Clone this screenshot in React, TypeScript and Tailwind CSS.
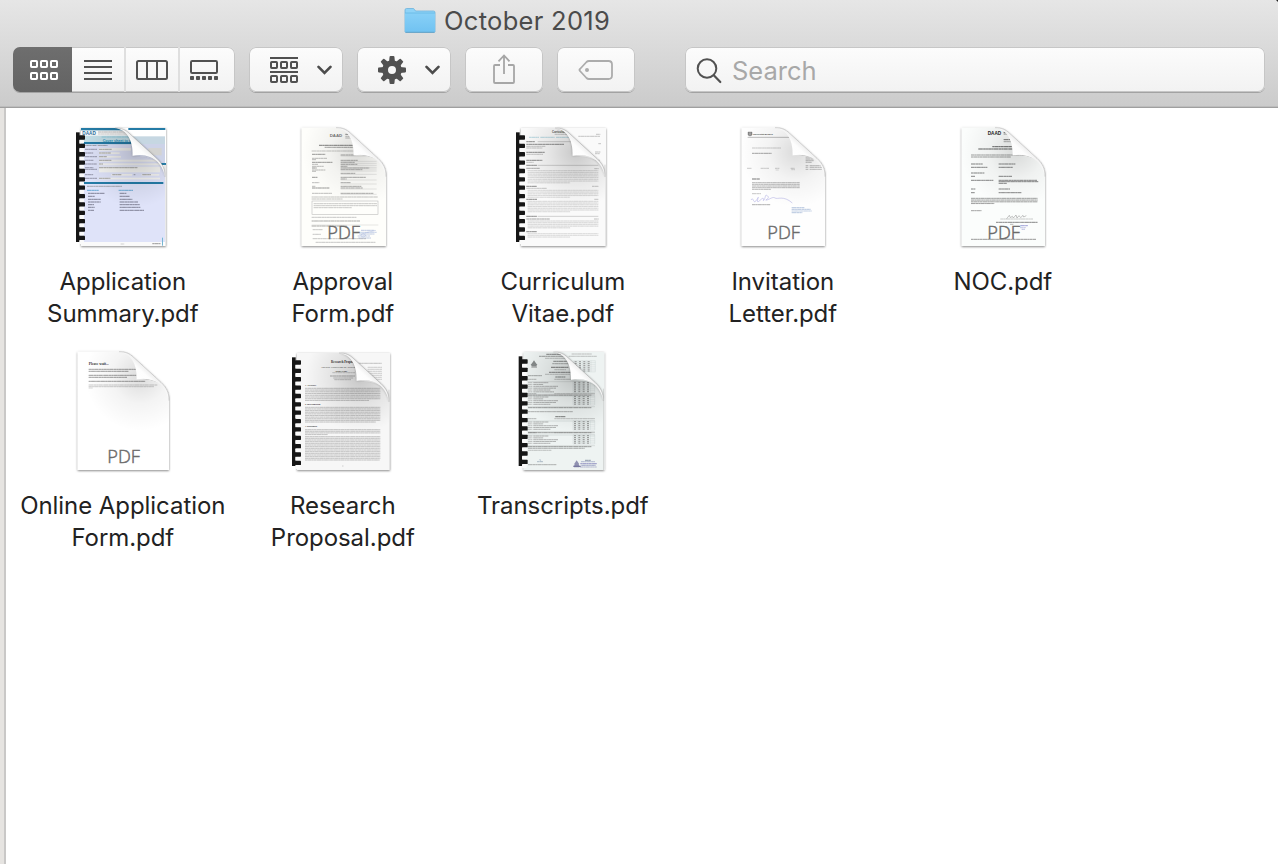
import React from "react";

/* One run of small print: x, y, width, and optionally colour and thickness */
type Run = [number, number, number, string?, number?];

const DASHES = [
  "9 1.5 5 1.5 12 2 7 1.5 4 1.5",
  "6 1.5 11 1.5 4 1.5 8 2 13 1.5",
  "13 2 7 1.5 5 1.5 10 1.5 3 1.5",
];

function Print({ runs }: { runs: Run[] }) {
  return (
    <>
      {runs.map(([x, y, w, color = "#8b8b8b", t = 2], i) => (
        <g key={i} stroke={color} strokeWidth={t} fill="none">
          <path d={`M${x} ${y}h${w}`} opacity="0.38" />
          <path d={`M${x} ${y}h${w}`} strokeDasharray={DASHES[i % 3]} opacity="0.42" />
        </g>
      ))}
    </>
  );
}

function paragraph(x: number, y: number, w: number, count: number, gap: number, color?: string, last = 0.6): Run[] {
  return Array.from({ length: count }, (_, i) => [x, y + i * gap, i === count - 1 ? w * last : w, color, 1.9] as Run);
}

interface PageProps {
  id: string;
  left: number;
  right: number;
  top?: number;
  bottom?: number;
  bound?: boolean;
  pdf?: boolean;
  paper?: string;
  behind?: React.ReactNode;
  children: React.ReactNode;
}

function Page({ id, left, right, top = 23, bottom = 378, bound, pdf, paper = "#fff", behind, children }: PageProps) {
  const r = right - (bound ? 3 : 0);
  const f = r - 97;
  const t = top;
  const outline = `M${left} ${t}H${r - 150}C${r - 120} ${t} ${f + 2} ${t + 28} ${f} ${t + 83}C${f + 35} ${t + 82} ${r} ${t + 90} ${r} ${t + 145}V${bottom}H${left}Z`;
  const curl = `M${r - 150} ${t}C${r - 130} ${t} ${r - 119} ${t + 5} ${r - 106} ${t + 17}L${r - 24} ${t + 92}C${r - 7} ${t + 108} ${r} ${t + 122} ${r} ${t + 147}C${r - 5} ${t + 112} ${r - 35} ${t + 72} ${f} ${t + 83}C${f + 2} ${t + 34} ${r - 117} ${t + 4} ${r - 150} ${t}Z`;
  const teeth = Array.from({ length: 13 }, (_, i) => t + 22 + i * 25.1);
  return (
    <svg viewBox="0 0 345 405" className="block h-[135px] w-[115px]">
      <defs>
        <clipPath id={`${id}-clip`}>
          <path d={outline} />
        </clipPath>
        <linearGradient id={`${id}-curl`} gradientUnits="userSpaceOnUse" x1={f} y1={t + 83} x2={f + 38} y2={t + 42}>
          <stop offset="0" stopColor="#fff" />
          <stop offset="0.5" stopColor="#fdfdfd" />
          <stop offset="0.82" stopColor="#ececec" />
          <stop offset="1" stopColor="#cecece" />
        </linearGradient>
        <radialGradient id={`${id}-shade`} gradientUnits="userSpaceOnUse" cx={f + 10} cy={t + 73} r="165">
          <stop offset="0" stopColor="#000" stopOpacity={bound ? 0.2 : 0.14} />
          <stop offset="0.5" stopColor="#000" stopOpacity={bound ? 0.08 : 0.045} />
          <stop offset="1" stopColor="#000" stopOpacity="0" />
        </radialGradient>
        <filter id={`${id}-shadow`} x="-15%" y="-10%" width="130%" height="125%">
          <feDropShadow dx="0" dy="2.5" stdDeviation="3.2" floodColor="#000" floodOpacity="0.5" />
        </filter>
        <filter id={`${id}-soft`} x="-20%" y="-20%" width="140%" height="140%">
          <feGaussianBlur stdDeviation="3" />
        </filter>
      </defs>
      {bound ? (
        <g filter={`url(#${id}-shadow)`}>
          <rect x={left} y={t} width={right - left} height={bottom - t} fill={paper} />
        </g>
      ) : (
        <g filter={`url(#${id}-shadow)`}>
          <path d={outline} fill={paper} />
          <path d={curl} fill="#eee" />
        </g>
      )}
      {behind}
      {bound && <path d={`M${r} ${t + 110}V${bottom}`} stroke="#a9a9a9" strokeWidth="2" opacity="0.7" />}
      <g clipPath={`url(#${id}-clip)`}>
        <path d={outline} fill={paper} />
        {children}
        <rect x={left} y={t} width={r - left} height={bottom - t} fill={`url(#${id}-shade)`} />
      </g>
      {bound && <path d={curl} fill="#000" opacity="0.3" filter={`url(#${id}-soft)`} />}
      <path d={curl} fill={`url(#${id}-curl)`} />
      <path
        d={`M${r - 150} ${t}C${r - 130} ${t} ${r - 119} ${t + 5} ${r - 106} ${t + 17}L${r - 24} ${t + 92}C${r - 7} ${t + 108} ${r} ${t + 122} ${r} ${t + 147}`}
        fill="none"
        stroke="#9b9b9b"
        strokeWidth="1.6"
        opacity="0.75"
      />
      {bound && <rect x={left - 15} y={t + 13} width="11" height={bottom - t - 25} fill="#161616" />}
      {bound &&
        teeth.map((y) => (
          <g key={y}>
            <rect x={left - 5} y={y + 13} width="14" height="12" rx="3" fill="#fafafa" />
            <rect x={left - 6} y={y} width="18" height="13" rx="2" fill="#161616" />
          </g>
        ))}
      {pdf && (
        <text x="176" y={bottom - 22} textAnchor="middle" fontFamily="'Open Sans', 'Noto Sans', sans-serif" fontSize="52" fontWeight="300" fill="#666" stroke="#707070" strokeWidth="1.4" textLength="98" lengthAdjust="spacingAndGlyphs">
          PDF
        </text>
      )}
    </svg>
  );
}

function Tiny({ x, y, size = 8, color = "#555", bold, serif, children }: { x: number; y: number; size?: number; color?: string; bold?: boolean; serif?: boolean; children: string }) {
  return (
    <text x={x} y={y} fontSize={size} fill={color} fontWeight={bold ? 700 : 400} fontFamily={serif ? "'Liberation Serif', serif" : "'Liberation Sans', sans-serif"}>
      {children}
    </text>
  );
}

function ApplicationSummary() {
  const teal = "#247ba6";
  return (
    <Page
      id="summary" left={48} right={303} top={24} bound
      behind={
        <g>
          <rect x="190" y="24" width="111" height="6" fill={teal} />
          <rect x="200" y="49" width="100" height="80" fill="#c6d7e2" />
          <rect x="200" y="72" width="100" height="57" fill="#cdd3e8" />
          <rect x="250" y="84" width="40" height="22" fill="#d3d3d1" />
          <rect x="265" y="129" width="38" height="6" fill={teal} />
        </g>
      }
    >
      <rect x="48" y="24" width="255" height="7" fill={teal} />
      <rect x="48" y="47" width="255" height="26" fill="#c4dfe8" />
      <rect x="48" y="66" width="255" height="7" fill={teal} />
      <rect x="48" y="73" width="255" height="293" fill="#dfe3f9" />
      <rect x="48" y="186" width="247" height="6" fill={teal} />
      <Tiny x={52} y={44} size={14} color="#286b9a" bold>DAAD</Tiny>
      <Print runs={[[99, 36, 95, "#777"], [99, 42, 90, "#aaa"], [110, 51, 90, "#5fb4cb"]]} />
      <Tiny x={113} y={65} size={11} color="#2a92ba" bold>Cover sheet to application</Tiny>
      <Tiny x={57} y={77} size={6} color="#444">Personal data / application</Tiny>
      <g fill="#f5f5f2">
        <rect x="102" y="84" width="96" height="8" />
        <rect x="102" y="97" width="62" height="5" />
        <rect x="102" y="108" width="66" height="5" />
        <rect x="102" y="119" width="188" height="6" />
        <rect x="102" y="130" width="183" height="6" />
        <rect x="102" y="140" width="183" height="17" />
        <rect x="139" y="162" width="62" height="5" />
        <rect x="230" y="162" width="53" height="5" />
        <rect x="102" y="173" width="183" height="5" />
      </g>
      <Print
        runs={[
          ...[88, 99, 110, 121, 132, 143, 148, 164, 175].map((y, i) => [60, y, i % 2 ? 25 : 36, "#555565", 2.2] as Run),
          [102, 88, 38, "#555"], [102, 99, 36, "#555"], [102, 110, 24, "#555"], [102, 121, 37, "#555"],
          [102, 132, 12, "#555"], [102, 143, 116, "#555"], [142, 164, 27, "#555"], [206, 164, 5, "#555"], [232, 164, 26, "#555"], [102, 175, 34, "#555"],
          [66, 199, 105, "#666"], [66, 211, 35, "#338fc0", 3], [161, 211, 43, "#338fc0", 3],
          ...[220, 229, 238, 246, 254, 262, 271].map((y, i) => [69, y, [50, 20, 38, 38, 18, 20, 18][i], "#404054", 2.5] as Run),
          ...[220, 229, 238, 246, 254, 262, 271].map((y, i) => [164, y, [20, 30, 38, 55, 60, 62, 73][i], "#404054", 2.5] as Run),
        ]}
      />
      <rect x="48" y="366" width="247" height="12" fill="#fafafa" />
      <rect x="291" y="353" width="3" height="24" fill="#75b6d3" />
      <Print runs={[[167, 372, 11, "#aaa"], [262, 371, 25, "#555", 2.5]]} />
    </Page>
  );
}

function ApprovalForm() {
  return (
    <Page id="approval" left={50} right={303} pdf paper="#fefefb">
      <Tiny x={134} y={52} size={13} color="#777" bold>DAAD</Tiny>
      <Print
        runs={[
          [181, 43, 26, "#555", 3], [181, 49, 26, "#777"], [181, 54, 26, "#777"],
          [102, 76, 107, "#444", 3], [119, 82, 88, "#666", 2.5], [80, 93, 130],
          ...[103, 115, 119, 127, 133, 139, 144, 150, 154, 172, 188, 199, 204, 220].map((y, i) => [81, y, [40, 45, 12, 62, 18, 35, 14, 40, 12, 17, 22, 10, 52, 60][i], i % 3 ? "#888" : "#444", 2.3] as Run),
          ...[105, 121, 127, 133, 139, 144, 149, 160, 172, 177, 188, 199, 204, 220].map((y, i) => [167, y, [44, 51, 42, 50, 20, 86, 65, 44, 76, 18, 30, 62, 66, 98][i], "#666", 2.3] as Run),
          [80, 231, 198], [80, 237, 93], ...paragraph(86, 251, 190, 3, 6), [80, 292, 135], [80, 303, 145, "#555"],
          [80, 318, 105, "#555"], [83, 329, 30], [83, 343, 25], [83, 356, 160], [92, 367, 180],
        ]}
      />
      <g stroke="#b5b5b5" strokeWidth="1" fill="none">
        {[108, 124, 130, 136, 142, 147, 153, 163, 180, 192, 207, 223].map((y) => <path key={y} d={`M167 ${y}h108`} />)}
        <rect x="81" y="243" width="198" height="41" strokeWidth="1.6" />
        <path d="M80 315h200" />
      </g>
      <Print runs={[[228, 331, 40, "#7890c8"], [220, 337, 55, "#8ba2d4"], [223, 342, 46, "#7992c7"], [218, 348, 37, "#8ba2d4"], [220, 354, 38, "#7992c7"]]} />
      <path d="M234 346c12-8 8 10-4 3s20-12 43-18" fill="none" stroke="#8ca2d3" />
    </Page>
  );
}

function CurriculumVitae() {
  const heads = [65, 136, 199, 238, 289, 335];
  return (
    <Page
      id="cv" left={48} right={303} top={24} bound paper="#fafafa"
      behind={<Print runs={[[273, 43, 13], [220, 49, 65], [280, 71, 8], [270, 96, 17], [270, 101, 14], [260, 121, 25]]} />}
    >
      <Tiny x={141} y={40} size={8} color="#444" bold>Curriculum Vitae</Tiny>
      <Print
        runs={[
          [149, 43, 45], [72, 52, 30, "#6eb4c8"], [106, 52, 43, "#6eb4c8"], [153, 52, 44, "#6eb4c8"],
          ...heads.map((y) => [64, y, y === 65 ? 26 : 32, "#444", 2.6] as Run),
          [64, 73, 113, "#444", 2.6], [64, 79, 57], [64, 84, 48], [64, 97, 55, "#444", 2.6], [64, 103, 50], [64, 121, 48, "#444", 2.6], [64, 127, 22],
          [64, 145, 40, "#555"], ...paragraph(68, 152, 212, 8, 5.2, "#aaa"),
          [64, 205, 62], ...paragraph(68, 211, 212, 5, 5.2, "#b0b0b0"),
          ...paragraph(68, 244, 212, 7, 5.2, "#adadad"), [64, 297, 70, "#555"],
          ...paragraph(68, 303, 212, 5, 5.1, "#adadad"), ...paragraph(68, 341, 212, 3, 5.1, "#b2b2b2"),
          [268, 146, 13, "#888"], [261, 199, 20], [268, 238, 12], [267, 297, 14],
        ]}
      />
      <g stroke="#a5a5a5" strokeWidth="1.5">
        {[65, 136, 289].map((y) => <path key={y} d={`M98 ${y}H280`} />)}
      </g>
    </Page>
  );
}

function InvitationLetter() {
  return (
    <Page id="invitation" left={50} right={300} pdf paper="#fefefe">
      <path d="M69 36h12v9q-6 6-12 0Z" fill="#888" stroke="#666" />
      <path d="M73 37v9m4-9v9" stroke="#ddd" />
      <Tiny x={84} y={45} size={6.5} color="#444" bold>Universität Bremen</Tiny>
      <path d="M68 52h130" stroke="#888" strokeWidth="1.6" />
      <Print
        runs={[
          [81, 84, 87, "#999"], [81, 100, 59, "#666", 2.5], [66, 145, 14, "#999"], [107, 145, 25, "#999"], [150, 145, 13, "#999"], [152, 150, 9, "#bbb"], [197, 145, 12, "#999"], [199, 149, 11, "#aaa"],
          [81, 177, 24, "#444", 3], ...paragraph(81, 188, 143, 5, 5, "#666", 0.4), [81, 221, 27], [81, 254, 55, "#777", 2.5],
          [242, 111, 50, "#666"], [242, 117, 24, "#777"], [242, 122, 24, "#777"], [242, 127, 18, "#777"],
          [242, 137, 8, "#777"], [254, 137, 34, "#777"], [242, 142, 8, "#777"], [254, 142, 37, "#777"], [242, 148, 8, "#777"], [254, 148, 37, "#777"],
          [200, 263, 38, "#6b8bc0"], [200, 268, 57, "#6b8bc0"], [200, 273, 60, "#84a0cc"], [200, 278, 32, "#6b8bc0"],
        ]}
      />
      <path d="M78 240c8-14 6 19 18-2s-9 20 9 3 6 8 12-1 2-19 11-12-13 14-3 12 18-11 25-6 25-9 52 15" fill="none" stroke="#b1b0e4" strokeWidth="1.7" />
    </Page>
  );
}

function Noc() {
  return (
    <Page id="noc" left={50} right={300} pdf paper="#fbfdfc">
      <Tiny x={128} y={45} size={14} color="#222" bold>DAAD</Tiny>
      <Print
        runs={[
          [176, 37, 25, "#222", 3], [176, 42, 26, "#444", 2.5], [176, 59, 26, "#333", 3], [176, 65, 28, "#555"],
          [142, 80, 65, "#222", 3], [100, 87, 110, "#222", 3.5], [78, 105, 165, "#444"], [78, 111, 120, "#444"],
          ...[132, 142, 159, 169, 181, 207, 218].map((y, i) => [78, y, [35, 49, 40, 12, 67, 13, 11][i], "#333", 2.5] as Run),
          ...[132, 142, 169, 181, 185, 190, 207, 218].map((y, i) => [161, y, [50, 42, 40, 115, 119, 25, 34, 68][i], "#333", 2.5] as Run),
          ...paragraph(78, 235, 200, 4, 5.2, "#333", 0.35), [78, 272, 32, "#444"], [153, 307, 125, "#333", 2.5],
          [195, 313, 10, "#777"], [166, 297, 98, "#999"], [78, 358, 195, "#444", 2.3],
          [226, 317, 23, "#7476c5", 3], [225, 323, 18, "#8b8cca"], [230, 328, 10, "#7476c5"],
        ]}
      />
      <path d="m185 296 8-10 3 7 6-4 3 5 8-9 3 9 6-7 5 6 7-7 2 5 8-4" fill="none" stroke="#777" strokeWidth="1.3" />
    </Page>
  );
}

function OnlineApplicationForm() {
  return (
    <Page id="online" left={38} right={312} top={23} pdf>
      <Tiny x={71} y={64} size={11} color="#333" serif bold>Please wait...</Tiny>
      <Print
        runs={[
          [71, 76, 148, "#444", 2.2], [71, 82, 120, "#444", 2.2], [71, 94, 144, "#444", 2.2], [71, 100, 115, "#444", 2.2],
          [71, 112, 170, "#444", 2.2], [71, 123, 206, "#999"], [71, 128, 196, "#999"], [71, 132, 12, "#aaa"],
        ]}
      />
    </Page>
  );
}

function ResearchProposal() {
  return (
    <Page
      id="research" left={36} right={315} top={27} bound paper="#f7f7f7"
      behind={<Print runs={[...paragraph(248, 70, 43, 7, 6, "#999", 1), [180, 58, 110, "#888"]]} />}
    >
      <Tiny x={138} y={57} size={9.5} color="#333" bold serif>Research Proposal</Tiny>
      <Tiny x={108} y={73} size={8} color="#444" serif>Towards Visualizing the Structure</Tiny>
      <Tiny x={149} y={83} size={6.5} color="#444" serif bold>Author Name</Tiny>
      <Print
        runs={[
          [142, 86, 68, "#999"], [135, 96, 75, "#777", 2.5], [145, 102, 60], [148, 107, 50],
          ...paragraph(60, 133, 226, 8, 5.2, "#808080", 0.85),
          ...paragraph(60, 190, 226, 10, 4.9, "#808080", 0.94),
          ...paragraph(60, 257, 226, 4, 4.9, "#808080", 0.3),
          ...paragraph(60, 278, 226, 15, 5, "#808080", 0.99), [172, 366, 3],
        ]}
      />
      {["Abstract", "Introduction", "Rationale"].map((title, i) => (
        <Tiny key={title} x={60} y={125 + [0, 57, 124][i]} size={7.5} color="#333" serif bold>{`${i + 1}   ${title}`}</Tiny>
      ))}
    </Page>
  );
}

function Transcripts() {
  const grid = (x: number, y: number, rows: number, cols: number) => (
    <g key={`${x}-${y}`} stroke="#c0c7c7" strokeWidth="0.9">
      {Array.from({ length: rows + 1 }, (_, i) => <path key={`r${i}`} d={`M${x} ${y + i * 5.6}h${cols * 13}`} />)}
      {Array.from({ length: cols + 1 }, (_, i) => <path key={`c${i}`} d={`M${x + i * 13} ${y}v${rows * 5.6}`} />)}
    </g>
  );
  const marks = (x: number, y: number, n: number): Run[] =>
    Array.from({ length: n * 4 }, (_, i) => [x + (i % 4) * 13, y + Math.floor(i / 4) * 5.6, 6, "#4c4c4c", 2.3] as Run);
  return (
    <Page
      id="transcripts" left={56} right={298} top={24} bound paper="#eef3f2"
      behind={<g>{grid(206, 50, 6, 5)}<Print runs={[[200, 30, 60], [191, 37, 85], ...marks(209, 53, 6)]} /></g>}
    >
      <Print runs={[[124, 31, 70, "#555", 3], [102, 37, 90, "#666", 2.5], [120, 43, 70], [145, 52, 46, "#444", 2.5], [142, 59, 50, "#777", 2.5], [138, 70, 52, "#444", 3], [148, 77, 35], [132, 85, 65, "#555", 3], [120, 91, 75], [69, 95, 42, "#555"], [151, 99, 30, "#444", 2.5]]} />
      <path d="m87 49 6 9 4 4-4 5H81l-4-5 4-4Z" fill="#868b8b" />
      <path d="M79 69h17" stroke="#555" strokeWidth="2" />
      {[
        [112, 6], [155, 5], [230, 5], [272, 5],
      ].map(([y, n]) => (
        <g key={y}>
          {grid(204, y, n, 5)}
          <path d={`M68 ${y + 1}h202M68 ${y + n * 5.6 + 5}h202`} stroke="#aeb4b4" />
          <Print
            runs={[
              [69, y - 6, 25, "#777"], [148, y - 6, 122, "#888"],
              ...Array.from({ length: n }, (_, i) => [69, y + 4 + i * 5.5, 13, "#888", 2] as Run),
              ...Array.from({ length: n }, (_, i) => [85, y + 4 + i * 5.5, [45, 30, 74, 68, 51, 62][i], "#777", 2.2] as Run),
              ...marks(207, y + 3, n),
              [69, y + n * 5.6 + 8, 190, "#555", 2.4],
            ]}
          />
        </g>
      ))}
      <Print runs={[[151, 218, 31, "#444", 3], [69, 203, 135, "#666"], [69, 313, 170, "#666"], [69, 319, 70], [96, 353, 18, "#6d819c"], [69, 362, 85, "#666"], [240, 349, 18, "#515f7b", 2.5]]} />
      <path d="m103 349 2-3 3 6" stroke="#667ea0" fill="none" />
      <g fill="#77779f">
        <path d="m215 349 6 9 2 12h-16l2-12Z" opacity="0.8" />
        <rect x="205" y="365" width="22" height="4" />
      </g>
      <Print runs={[[228, 353, 42, "#6e79ad"], [226, 359, 50, "#6d6baf", 3], [229, 364, 43, "#535b9d"], [225, 369, 50, "#7879ad"]]} />
    </Page>
  );
}

const FILES = [
  { lines: ["Application", "Summary.pdf"], icon: <ApplicationSummary /> },
  { lines: ["Approval", "Form.pdf"], icon: <ApprovalForm /> },
  { lines: ["Curriculum", "Vitae.pdf"], icon: <CurriculumVitae /> },
  { lines: ["Invitation", "Letter.pdf"], icon: <InvitationLetter /> },
  { lines: ["NOC.pdf"], icon: <Noc /> },
  { lines: ["Online Application", "Form.pdf"], icon: <OnlineApplicationForm /> },
  { lines: ["Research", "Proposal.pdf"], icon: <ResearchProposal /> },
  { lines: ["Transcripts.pdf"], icon: <Transcripts /> },
];

const BUTTON =
  "flex h-[45px] items-center rounded-[7px] bg-linear-to-b from-[#fcfcfc] to-[#f2f2f2] shadow-[inset_0_0_0_1px_#c6c6c6,0_1px_0_0_#a2a2a2]";

function Squares({ y, color }: { y: number; color: string }) {
  return (
    <g fill="none" stroke={color} strokeWidth="2">
      {[1, 11, 21].map((x) => <rect key={x} x={x} y={y} width="6" height="6" rx="0.8" />)}
    </g>
  );
}

function Chevron() {
  return (
    <svg viewBox="0 0 15 10" className="h-[10px] w-[15px]">
      <path d="M1.5 1.8 7.5 7.8 13.5 1.8" fill="none" stroke="#4c4c4c" strokeWidth="2.6" strokeLinecap="round" />
    </svg>
  );
}

function Gear() {
  return (
    <svg viewBox="-14 -14 28 28" className="h-7 w-7">
      <g fill="#515151">
        {[0, 45, 90, 135, 180, 225, 270, 315].map((a) => (
          <path key={a} transform={`rotate(${a})`} d="M-3-8-2.4-13.2Q-2.3-14-1.5-14h3Q2.3-14 2.4-13.2L3-8Z" />
        ))}
      </g>
      <circle r="6.9" fill="none" stroke="#515151" strokeWidth="5.8" />
    </svg>
  );
}

function Toolbar() {
  return (
    <header className="relative h-[108px] shrink-0 border-b border-[#9f9f9f] bg-linear-to-b from-[#e6e6e6] to-[#cbcbcb] shadow-[inset_0_-1px_0_#bcbcbc]">
      <div className="flex h-[47px] items-start pl-[404px] pt-[7px]">
        <svg viewBox="0 0 32 27" className="h-[27px] w-8">
          <defs>
            <linearGradient id="folder" x1="0" y1="0" x2="0" y2="1">
              <stop offset="0" stopColor="#88d0f7" />
              <stop offset="1" stopColor="#70c2f1" />
            </linearGradient>
          </defs>
          <path d="M1 25V3q0-1.500 1.500-1.500H9q1 0 1.500 1l1 1.500H29.500q1.500 0 1.500 1.500V25Z" fill="#8fd3f7" stroke="#6cb3dc" strokeWidth="0.8" />
          <path d="M1 6h30v18.500q0 .8-.8.8H1.800q-.8 0-.8-.8Z" fill="url(#folder)" />
          <path d="M1 6h30" stroke="#65b7e3" strokeWidth="0.8" />
          <path d="M1.500 25.300h29" stroke="#5f9fc5" strokeWidth="1" />
        </svg>
        <h1 className="ml-2 -mt-0.5 text-[25.5px] leading-8 tracking-[0.3px] whitespace-nowrap text-[#4b4b4b]">October 2019</h1>
      </div>
      <div className="flex items-start">
        <div className={`${BUTTON} ml-[13px] w-[222px] overflow-hidden`}>
          <div className="flex h-full w-[59px] items-center justify-center bg-linear-to-b from-[#6e6e6e] to-[#636363] pl-[3px]">
            <svg viewBox="0 0 28 20" className="h-5 w-7"><Squares y={1} color="#fff" /><Squares y={13} color="#fff" /></svg>
          </div>
          <div className="flex h-full w-[54px] items-center justify-center border-r-2 border-[#dfdfdf]">
            <svg viewBox="0 0 28 20" className="h-5 w-7"><path d="M0 1h28M0 7h28M0 13h28M0 19h28" stroke="#515151" strokeWidth="2" /></svg>
          </div>
          <div className="flex h-full w-[54px] items-center justify-center border-r-2 border-[#dfdfdf]">
            <svg viewBox="0 0 32 20" className="h-5 w-8"><rect x="1" y="1" width="30" height="18" rx="1.500" fill="none" stroke="#515151" strokeWidth="2" /><path d="M11 1v18M21 1v18" stroke="#515151" strokeWidth="2" /></svg>
          </div>
          <div className="flex h-full flex-1 items-center justify-center pr-[7px]">
            <svg viewBox="0 0 28 20" className="h-5 w-7">
              <rect x="1" y="1" width="26" height="12" rx="1.200" fill="none" stroke="#515151" strokeWidth="2" />
              {[0, 6, 12, 18, 24].map((x) => <rect key={x} x={x} y="16" width="4" height="4" rx="0.8" fill="#515151" />)}
            </svg>
          </div>
        </div>
        <div className={`${BUTTON} ml-[14px] w-[94px] justify-between pl-[21px] pr-[11px]`}>
          <svg viewBox="0 0 28 26" className="h-[26px] w-7"><path d="M0 1h28M0 15h28" stroke="#515151" strokeWidth="2" /><Squares y={5} color="#515151" /><Squares y={19} color="#515151" /></svg>
          <Chevron />
        </div>
        <div className={`${BUTTON} ml-[14px] w-[94px] justify-between pl-[21px] pr-[11px]`}><Gear /><Chevron /></div>
        <div className={`${BUTTON} ml-[14px] w-[78px] items-start justify-center pt-[7px]`}>
          <svg viewBox="0 0 24 31" className="h-[31px] w-6">
            <path d="M8 11H3q-1 0-1 1v16q0 1 1 1h18q1 0 1-1V12q0-1-1-1h-5M12 20V1.500M6.500 7.300 12 1.500l5.500 5.800" fill="none" stroke="#a6a6a6" strokeWidth="1.800" />
          </svg>
        </div>
        <div className={`${BUTTON} ml-[14px] w-[78px] justify-center`}>
          <svg viewBox="0 0 36 22" className="h-[22px] w-9">
            <path d="M11 2h19.500q3.500 0 3.500 3.500v11q0 3.500-3.500 3.500H11q-1.500 0-2.500-1L2 12q-1-1 0-2L8.500 3Q9.500 2 11 2Z" fill="none" stroke="#acacac" strokeWidth="1.800" />
            <circle cx="9" cy="11" r="2" fill="#acacac" />
          </svg>
        </div>
        <div className={`${BUTTON} ml-[50px] w-[580px] pl-[11px]`}>
          <svg viewBox="0 0 27 27" className="mt-0.5 h-[27px] w-[27px]"><circle cx="11" cy="11.500" r="9.300" fill="none" stroke="#515151" strokeWidth="2" /><path d="m17.800 18.300 6.500 6.700" stroke="#515151" strokeWidth="2.200" strokeLinecap="round" /></svg>
          <span className="ml-[9px] mt-[3px] text-[25.5px] leading-8 text-[#a8a8a8]">Search</span>
        </div>
      </div>
      <svg viewBox="0 0 2 2" className="absolute right-0 top-0 h-0.5 w-0.5"><path d="M0 0h2v2Z" fill="#222" /></svg>
    </header>
  );
}

export default function App() {
  return (
    <div className="flex h-[864px] w-[1278px] flex-col overflow-hidden bg-white font-['Inter','Liberation_Sans',sans-serif]">
      <Toolbar />
      <div className="flex min-h-0 flex-1">
        <div className="w-1.5 shrink-0 border-r-2 border-[#c9c8c7] bg-[#e6e4e1]" />
        <main className="grid auto-rows-[224px] grid-cols-[repeat(5,220px)] content-start pl-[6.5px] pt-3">
          {FILES.map(({ lines, icon }) => (
            <div key={lines[0]} className="flex flex-col items-center">
              {icon}
              <div className="mt-[11px] pl-[0.6px] text-center text-[24px] leading-8 tracking-[-0.06px] text-[#222]">
                {lines.map((line) => <div key={line} className="whitespace-nowrap">{line}</div>)}
              </div>
            </div>
          ))}
        </main>
      </div>
    </div>
  );
}
